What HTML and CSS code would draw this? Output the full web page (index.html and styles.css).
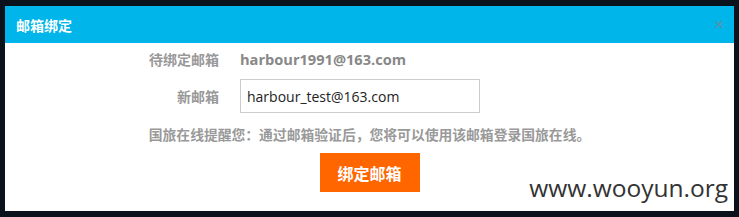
FILE: index.html
```html
<!DOCTYPE html>
<html>
<head>
<meta charset="utf-8">
<link rel="stylesheet" href="styles.css">
</head>
<body>
<div class="dialog">
  <div class="titlebar">
    <span class="title">邮箱绑定</span>
    <span class="close">×</span>
  </div>
  <div class="content">
    <div class="row row-first">
      <span class="label">待绑定邮箱</span>
      <span class="value">harbour1991@163.com</span>
    </div>
    <div class="row row-input">
      <span class="label">新邮箱</span>
      <div class="input">harbour_test@163.com</div>
    </div>
    <div class="notice">国旅在线提醒您：通过邮箱验证后，您将可以使用该邮箱登录国旅在线。</div>
    <div class="actions">
      <div class="btn">绑定邮箱</div>
    </div>
    <div class="watermark">www.wooyun.org</div>
  </div>
</div>
</body>
</html>
```
FILE: styles.css
```css
html, body {
  margin: 0;
  padding: 0;
}
body {
  background: #0a121c;
  width: 739px;
  height: 217px;
  overflow: hidden;
  font-family: "Noto Sans CJK SC", "Liberation Sans", sans-serif;
}
.dialog {
  margin: 6px 0 0 5px;
  width: 729px;
  height: 205px;
  background: #fff;
  position: relative;
}
.titlebar {
  height: 37px;
  background: #00b5ea;
  display: flex;
  align-items: center;
  justify-content: space-between;
  padding: 0 10px 0 11px;
}
.title {
  color: #fff;
  font-weight: bold;
  font-size: 14px;
}
.close {
  color: #5f8fa8;
  font-size: 17px;
  font-family: "Liberation Sans", sans-serif;
}
.content {
  position: relative;
  height: 168px;
}
.row {
  display: flex;
  align-items: center;
}
.label {
  width: 214px;
  text-align: right;
  color: #999;
  font-weight: bold;
  font-size: 14px;
}
.row-first {
  height: 32px;
}
.value {
  margin-left: 21px;
  color: #888;
  font-weight: bold;
  font-size: 14.6px;
  font-family: "Open Sans", "Liberation Sans", sans-serif;
}
.row-input {
  margin-top: 4px;
}
.input {
  margin-left: 21px;
  width: 232px;
  height: 32px;
  border: 1px solid #ccc;
  padding-left: 6px;
  display: flex;
  align-items: center;
  font-size: 14px;
  color: #222;
  font-family: "Open Sans", "Liberation Sans", sans-serif;
}
.notice {
  margin-top: 11px;
  text-align: center;
  color: #999;
  font-weight: bold;
  font-size: 13.8px;
  padding-left: 0;
}
.actions {
  display: flex;
  justify-content: center;
  margin-top: 9px;
}
.btn {
  width: 100px;
  height: 39px;
  background: #ff6600;
  color: #fff;
  font-weight: bold;
  font-size: 16px;
  display: flex;
  align-items: center;
  justify-content: center;
}
.watermark {
  position: absolute;
  right: 6px;
  top: 128px;
  font-size: 24.5px;
  color: #333;
  font-family: "Open Sans", "Liberation Sans", sans-serif;
}
```
